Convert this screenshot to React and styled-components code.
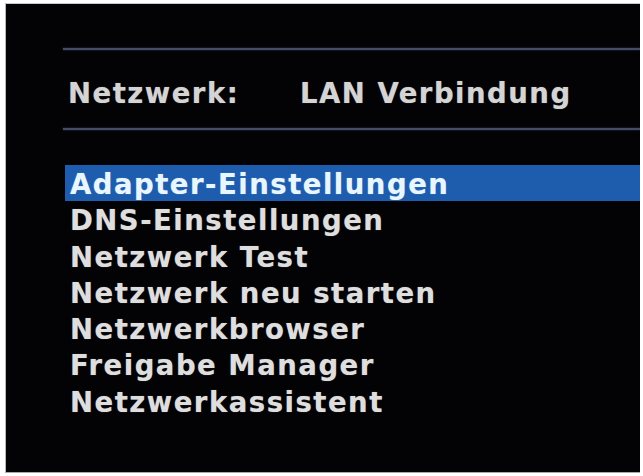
import React from 'react'
import styled, { createGlobalStyle } from 'styled-components'

const GlobalStyle = createGlobalStyle`
    html, body {
        margin: 0;
        padding: 0;
        background: #ffffff;
    }
    * {
        box-sizing: border-box;
    }
`

const Screen = styled.div`
    margin: 3px 0 0 5px;
    width: 635px;
    height: 470px;
    background: #030305;
    border-left: 1px solid #b8b8b8;
    border-top: 1px solid #c8c8c8;
    border-bottom: 1px solid #a8a8a8;
    padding: 44px 0 0 57px;
    font-family: "DejaVu Sans", "Liberation Sans", sans-serif;
    font-weight: bold;
    font-size: 27.5px;
    letter-spacing: 1.5px;
    color: #dedede;
    text-shadow: 0 0 1px rgba(255, 255, 255, 0.45);
    overflow: hidden;
`

const Divider = styled.div`
    height: 2px;
    margin-top: ${p => p.$gap}px;
    background: #434a6a;
    box-shadow: 0 0 2px rgba(90, 100, 150, 0.6);
`

const HeaderRow = styled.div`
    display: grid;
    grid-template-columns: 232px 1fr;
    margin-top: 25px;
    padding-left: 5px;
    height: 36px;
    line-height: 36px;
    color: #d4d4d4;
`

const Menu = styled.ul`
    list-style: none;
    margin: 35px 0 0 2px;
    padding: 0;
`

const Item = styled.li`
    height: 36.3px;
    line-height: 38px;
    padding-left: 5px;
    white-space: nowrap;
    background: ${p => (p.$active ? '#1e5dad' : 'transparent')};
    color: ${p => (p.$active ? '#e8f6ff' : '#dedede')};
`

const items = [
    'Adapter-Einstellungen',
    'DNS-Einstellungen',
    'Netzwerk Test',
    'Netzwerk neu starten',
    'Netzwerkbrowser',
    'Freigabe Manager',
    'Netzwerkassistent',
]

export default function App() {
    return (
        <>
            <GlobalStyle />
            <Screen>
                <Divider $gap={0} />
                <HeaderRow>
                    <span>Netzwerk:</span>
                    <span>LAN Verbindung</span>
                </HeaderRow>
                <Divider $gap={17} />
                <Menu>
                    {items.map((label, i) => (
                        <Item key={label} $active={i === 0}>{label}</Item>
                    ))}
                </Menu>
            </Screen>
        </>
    )
}
